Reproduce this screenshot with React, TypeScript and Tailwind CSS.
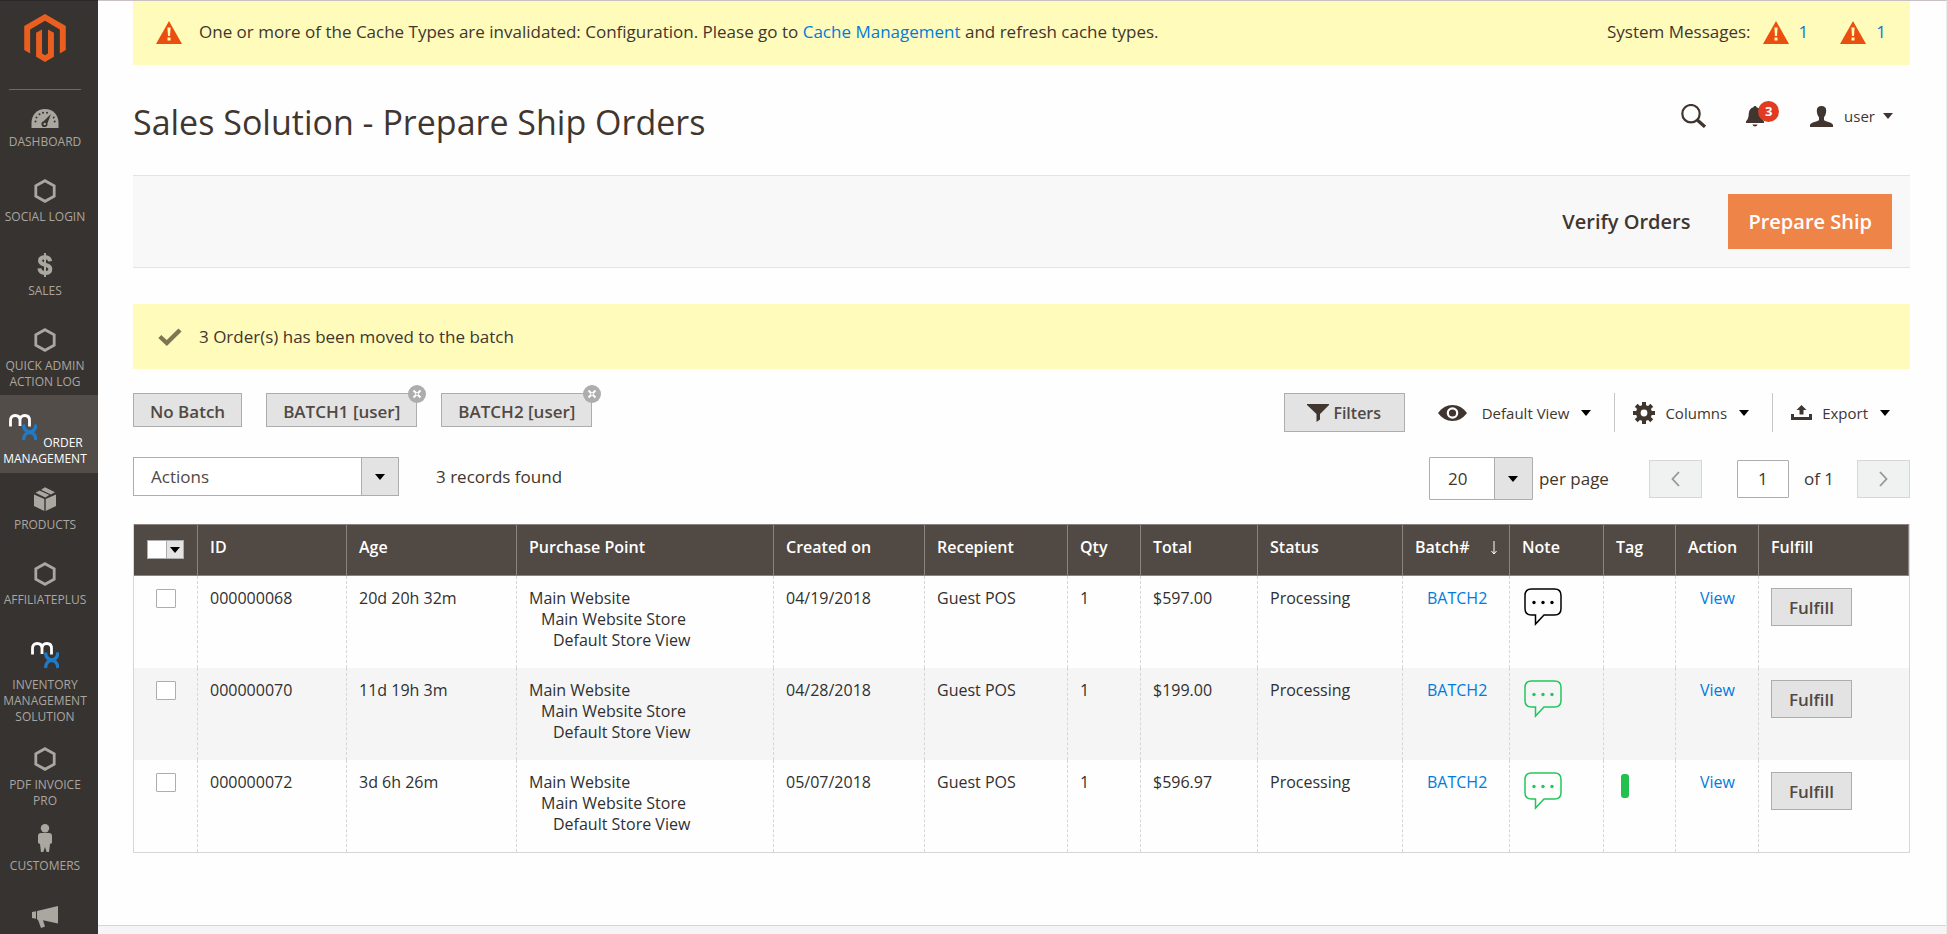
import clsx from 'clsx';
import { ReactNode } from 'react';

type IconProps = {
	className?: string;
};

type MenuItem = {
	label: string;
	icon: ReactNode;
	spacing: string;
};

type Order = {
	id: string;
	age: string;
	created: string;
	qty: number;
	total: string;
	batch: string;
	hasNote: boolean;
	tagged: boolean;
};

const MagentoLogo = () => (
	<svg viewBox="1.6 0 20.8 24" className="h-12 w-[42px] fill-[#ea5f1f]" aria-hidden="true">
		<path d="M12 24l-4.455-2.572v-12l2.97-1.715v12.001l1.485.902 1.485-.902V7.713l2.971 1.715v12L12 24zM22.391 6v12l-2.969 1.714V7.713L12 3.43 4.574 7.713v12.001L1.609 18V6L12 0l10.391 6z" />
	</svg>
);

const GaugeIcon = () => (
	<svg viewBox="0 0 28 24" className="h-6 w-7" aria-hidden="true">
		<path d="M.5 24v-5C.5 11 6 5 14 5s13.500 6 13.500 14v5z" fill="#aaa6a0" />
		<g fill="#373330">
			<circle cx="4.5" cy="17.5" r="1" />
			<circle cx="5.5" cy="13.5" r="1" />
			<circle cx="8.5" cy="10.3" r="1" />
			<circle cx="12" cy="8.7" r="1" />
			<circle cx="16" cy="8.7" r="1" />
			<circle cx="22.7" cy="13.5" r="1" />
			<circle cx="23.7" cy="17.5" r="1" />
			<path d="M20 10l-3.600 9.400a3 3 0 1 1-3.800-2.200z" />
		</g>
		<circle cx="13.7" cy="20" r="1.2" fill="#aaa6a0" />
	</svg>
);

const HexIcon = () => (
	<svg viewBox="0 0 22 24" className="h-6 w-[22px]" aria-hidden="true">
		<path d="M11 1.7l9.2 5.2v10.2L11 22.3l-9.2-5.2V6.9z" fill="none" stroke="#aaa6a0" strokeWidth="2.8" />
	</svg>
);

const DollarIcon = () => (
	<svg viewBox="0 0 16 24" className="h-6 w-4" aria-hidden="true">
		<g fill="none" stroke="#aaa6a0">
			<path d="M13.2 8.2C12.8 5.6 11 4.3 8 4.3S3 5.6 3 7.8s1.600 3.100 5 3.900 5.300 1.700 5.300 4.200-2 4-5.300 4-5.300-1.500-5.600-4.500" strokeWidth="4" />
			<path d="M8 0v24" strokeWidth="2" />
		</g>
	</svg>
);

const MxIcon = () => (
	<svg viewBox="0 0 28 28" className="size-7 shrink-0" aria-hidden="true">
		<g fill="none">
			<path d="M1.500 13.500V7.500c0-3.200 1.700-5 4.700-5s4.800 1.800 4.800 5v5.500M11 7.500c0-3.200 1.800-5 4.800-5s4.700 1.800 4.700 5v6" stroke="#fff" strokeWidth="2.800" />
			<path d="M14.500 11.500c.4 5 2.600 7.300 6.200 7.300s5.800-2.300 6.200-7.300M14.500 27c.4-5 2.600-7.300 6.200-7.300s5.800 2.300 6.200 7.300" stroke="#1f7bc9" strokeWidth="3.200" />
		</g>
	</svg>
);

const BoxIcon = () => (
	<svg viewBox="0 0 22 24" className="h-6 w-[22px] fill-[#aaa6a0]" aria-hidden="true">
		<path d="M0 7.500l10.300 4.500v12L0 19zM22 7.500L11.700 12v12L22 19z" />
		<path d="M1.500 5.800l4-2.300 9.800 4.400-4 2.500zM7 2.700L11 .3l10 5-4.200 2.100z" />
	</svg>
);

const PersonIcon = () => (
	<svg viewBox="0 0 14 28" className="h-7 w-3.5 fill-[#aaa6a0]" aria-hidden="true">
		<circle cx="7" cy="4.200" r="4.200" />
		<path d="M3 9h8c2 0 3 1.300 3 3v7l-2 1-1 8.500H8.800L7 23l-1.800 5.500H3L2 20l-2-1v-7c0-1.700 1-3 3-3z" />
	</svg>
);

const MegaphoneIcon = () => (
	<svg viewBox="0 0 26 22" className="h-[22px] w-[26px] fill-[#aaa6a0]" aria-hidden="true">
		<path d="M0 6l4-.8v7.600L0 12zM5 5l21-5v17.500L11 14.300l2 6.200-4 1.500-3-8.300-1-.2z" />
	</svg>
);

const WarningIcon = () => (
	<svg viewBox="0 0 26 23" className="h-[23px] w-[26px] shrink-0" role="img" aria-label="Warning">
		<path d="M13 0l13 23H0z" fill="#eb4f10" />
		<path d="M11.400 6.500h3.200l-.6 8.500h-2zM11.500 16.500h3v3h-3z" fill="#fffbbb" />
	</svg>
);

const CheckIcon = () => (
	<svg viewBox="0 0 24 18" className="h-[18px] w-6 shrink-0" aria-hidden="true">
		<path d="M1.800 8.500l7 6.500L22 2" fill="none" stroke="#7d7650" strokeWidth="4.400" />
	</svg>
);

const SearchIcon = () => (
	<svg viewBox="0 0 25 24" className="h-6 w-[25px]" aria-hidden="true">
		<g fill="none" stroke="#41362f">
			<circle cx="10" cy="9.700" r="8.700" strokeWidth="2.200" />
			<path d="M16 15.800l8 7" strokeWidth="3.400" />
		</g>
	</svg>
);

const BellIcon = () => (
	<svg viewBox="0 0 18 21" className="h-[21px] w-[18px] fill-[#41362f]" aria-hidden="true">
		<path d="M9 0c.8 0 1.400.500 1.500 1.300 3 .7 4.500 3 4.700 6 .2 4 .8 6 2.800 8.200v1.500H0v-1.500c2-2.200 2.600-4.200 2.800-8.200.2-3 1.700-5.300 4.700-6C7.600.5 8.200 0 9 0zM6.500 18.500h5c-.3 1.300-1.200 2-2.500 2s-2.200-.7-2.500-2z" />
	</svg>
);

const UserIcon = () => (
	<svg viewBox="0 0 23 21" className="h-[21px] w-[23px] fill-[#41362f]" aria-hidden="true">
		<path d="M11.500 0c3 0 4.700 1.700 4.700 4.500 0 2.500-.7 5-2.200 6.700V14c.5 1.500 8.500 2 9 5v2H0v-2c.5-3 8.500-3.500 9-5v-2.800C7.500 9.500 6.800 7 6.800 4.500 6.800 1.700 8.500 0 11.500 0z" />
	</svg>
);

const FunnelIcon = () => (
	<svg viewBox="0 0 22 18" className="h-[18px] w-[22px] fill-[#41362f]" aria-hidden="true">
		<path d="M0 0h22v1l-9 9v5.500L9.500 18v-8L0 1z" />
	</svg>
);

const EyeIcon = () => (
	<svg viewBox="0 0 29 16" className="h-4 w-[29px]" aria-hidden="true">
		<path d="M0 8c4-5.300 8.500-8 14.500-8S25 2.700 29 8c-4 5.300-8.500 8-14.500 8S4 13.300 0 8z" fill="#41362f" />
		<circle cx="14.500" cy="8" r="4.700" fill="none" stroke="#fff" strokeWidth="2.200" />
	</svg>
);

const GearIcon = () => (
	<svg viewBox="-11 -11 22 22" className="size-[22px]" aria-hidden="true">
		<g fill="#41362f">
			<path d="M-2-11h4v22h-4zM-11-2h22v4h-22z" />
			<path d="M-2-11h4v22h-4zM-11-2h22v4h-22z" transform="rotate(45)" />
			<circle r="8" />
		</g>
		<circle r="3.400" fill="#fff" />
	</svg>
);

const ExportIcon = () => (
	<svg viewBox="0 0 21 15" className="h-[15px] w-[21px] fill-[#41362f]" aria-hidden="true">
		<path d="M0 9h3v3h15V9h3v6H0z" />
		<path d="M10.500 0l5 5h-3v4.500h-4V5h-3z" />
	</svg>
);

const Caret = ({ className }: IconProps) => (
	<svg viewBox="0 0 10 6" className={clsx('h-1.5 w-2.5 shrink-0', className)} aria-hidden="true">
		<path d="M0 0h10L5 6z" fill="currentColor" />
	</svg>
);

const Chevron = ({ className }: IconProps) => (
	<svg viewBox="0 0 9 16" className={clsx('h-4 w-[9px]', className)} aria-hidden="true">
		<path d="M8 1L1.500 8 8 15" fill="none" stroke="#9b9591" strokeWidth="1.800" />
	</svg>
);

const CloseIcon = () => (
	<svg viewBox="0 0 18 18" className="size-[18px]" aria-hidden="true">
		<circle cx="9" cy="9" r="9" fill="#adadad" />
		<path d="M5.500 5.500l7 7M12.500 5.500l-7 7" stroke="#fff" strokeWidth="2" />
		<circle cx="9" cy="9" r="1" fill="#adadad" />
	</svg>
);

const NoteIcon = ({ className }: IconProps) => (
	<svg viewBox="0 0 38 38" className={clsx('h-[38px] w-[38px]', className)} aria-hidden="true">
		<path
			d="M7.500 1h23c4 0 6.500 2.500 6.500 6.500v13c0 4-2.500 6.500-6.500 6.500H20l-8.500 9v-9h-4C3.500 27 1 24.500 1 20.500v-13C1 3.500 3.500 1 7.500 1z"
			fill="none"
			stroke="currentColor"
			strokeWidth="1.500"
		/>
		<g fill="currentColor">
			<circle cx="10" cy="14.500" r="1.700" />
			<circle cx="19" cy="14.500" r="1.700" />
			<circle cx="28" cy="14.500" r="1.700" />
		</g>
	</svg>
);

const menuTop: MenuItem[] = [
	{ label: 'Dashboard', icon: <GaugeIcon />, spacing: 'gap-1.5 pt-3.5' },
	{ label: 'Social Login', icon: <HexIcon />, spacing: 'gap-1.5 pt-6' },
	{ label: 'Sales', icon: <DollarIcon />, spacing: 'gap-1.5 pt-[23px]' },
	{ label: 'Quick Admin Action Log', icon: <HexIcon />, spacing: 'gap-1.5 pt-6' },
];

const menuBottom: MenuItem[] = [
	{ label: 'Products', icon: <BoxIcon />, spacing: 'gap-1.5 pt-3.5' },
	{ label: 'Affiliateplus', icon: <HexIcon />, spacing: 'gap-1.5 pt-6' },
	{ label: 'Inventory Management Solution', icon: <MxIcon />, spacing: 'gap-2 pt-7' },
	{ label: 'PDF Invoice Pro', icon: <HexIcon />, spacing: 'gap-1.5 pt-[17px]' },
	{ label: 'Customers', icon: <PersonIcon />, spacing: 'gap-1.5 pt-2.5' },
];

const batches = ['BATCH1 [user]', 'BATCH2 [user]'];

const orders: Order[] = [
	{ id: '000000068', age: '20d 20h 32m', created: '04/19/2018', qty: 1, total: '$597.00', batch: 'BATCH2', hasNote: false, tagged: false },
	{ id: '000000070', age: '11d 19h 3m', created: '04/28/2018', qty: 1, total: '$199.00', batch: 'BATCH2', hasNote: true, tagged: false },
	{ id: '000000072', age: '3d 6h 26m', created: '05/07/2018', qty: 1, total: '$596.97', batch: 'BATCH2', hasNote: true, tagged: true },
];

const MenuLink = ({ label, icon, spacing }: MenuItem) => (
	<li>
		<a href="#" className={clsx('flex flex-col items-center pr-2 pb-[5px]', spacing)}>
			{icon}
			<span className="text-center">{label}</span>
		</a>
	</li>
);

const Sidebar = () => (
	<aside className="w-[98px] shrink-0 border-t border-[#2a2728] bg-[#373330] text-xs leading-4 text-[#aaa6a0] uppercase">
		<a href="#" aria-label="Home" className="mr-[17px] ml-[9px] flex h-[89px] justify-center border-b border-[#736963] pt-[13px]">
			<MagentoLogo />
		</a>
		<ul>
			{menuTop.map((item) => (
				<MenuLink key={item.label} {...item} />
			))}
			<li className="bg-[#524d49] text-white">
				<a href="#" className="block pt-[18px] pr-2 pb-1.5 text-center font-medium">
					<span className="flex items-start justify-center gap-1.5 pl-0.5">
						<MxIcon />
						<span className="pt-[22px]">Order</span>
					</span>
					<span className="block">Management</span>
				</a>
			</li>
			{menuBottom.map((item) => (
				<MenuLink key={item.label} {...item} />
			))}
			<li>
				<a href="#" aria-label="Marketing" className="flex justify-center pt-[27px] pr-2">
					<MegaphoneIcon />
				</a>
			</li>
		</ul>
	</aside>
);

const SystemMessages = () => (
	<div className="flex h-16 items-center bg-[#fffbbb] pr-6 pb-0.5 pl-[23px]">
		<WarningIcon />
		<p className="ml-[17px]">
			One or more of the Cache Types are invalidated: Configuration. Please go to{' '}
			<a href="#" className="text-[#007bdb]">
				Cache Management
			</a>{' '}
			and refresh cache types.
		</p>
		<div className="ml-auto flex items-center">
			<span className="mr-3">System Messages:</span>
			<WarningIcon />
			<a href="#" className="mr-8 ml-2.5 text-[#007bdb]">
				1
			</a>
			<WarningIcon />
			<a href="#" className="ml-2.5 text-[#007bdb]">
				1
			</a>
		</div>
	</div>
);

const PageHeader = () => (
	<header className="flex h-[110px] items-start">
		<h1 className="pt-[35px] text-[34px] leading-[44px]">
			Sales Solution - Prepare Ship Orders
		</h1>
		<div className="ml-auto flex items-center pt-[39px] pr-[17px]">
			<button aria-label="Search">
				<SearchIcon />
			</button>
			<button aria-label="Notifications" className="relative ml-10">
				<BellIcon />
				<span className="absolute -top-[5px] left-3 flex size-[21px] items-center justify-center rounded-full bg-[#e13b22] text-[13px] font-bold text-white">
					3
				</span>
			</button>
			<button className="ml-[46px] flex items-center text-[15px]">
				<UserIcon />
				<span className="mr-2 ml-[11px]">user</span>
				<Caret />
			</button>
		</div>
	</header>
);

const BatchTabs = () => (
	<div className="flex gap-6">
		<button className="h-[34px] border border-[#adadad] bg-[#e3e3e3] px-4 pt-1 font-semibold text-[#514943]">
			No Batch
		</button>
		{batches.map((batch) => (
			<div key={batch} className="relative">
				<button className="h-[34px] border border-[#adadad] bg-[#e3e3e3] px-4 pt-1 font-semibold text-[#514943]">
					{batch}
				</button>
				<button aria-label={`Remove ${batch}`} className="absolute -top-2 -right-[9px]">
					<CloseIcon />
				</button>
			</div>
		))}
	</div>
);

const GridControls = () => (
	<div className="flex h-[39px] text-[15px]">
		<button className="flex w-[121px] items-center justify-center gap-1 border border-[#adadad] bg-[#e3e3e3] text-base font-semibold text-[#514943]">
			<FunnelIcon />
			Filters
		</button>
		<button className="flex items-center pr-[23px] pl-[33px]">
			<EyeIcon />
			<span className="mr-3 ml-[15px]">Default View</span>
			<Caret className="text-black" />
		</button>
		<button className="flex items-center border-l border-[#c9c5c3] pr-[23px] pl-[18px]">
			<GearIcon />
			<span className="mr-3 ml-2.5">Columns</span>
			<Caret className="text-black" />
		</button>
		<button className="flex items-center border-l border-[#c9c5c3] pr-5 pl-[18px]">
			<ExportIcon />
			<span className="mr-3 ml-2.5">Export</span>
			<Caret className="text-black" />
		</button>
	</div>
);

const Pager = () => (
	<div className="flex items-center">
		<div className="relative">
			<select
				id="page-size"
				defaultValue="20"
				className="block h-[43px] w-[104px] appearance-none rounded-[1px] border border-[#adadad] bg-white pl-[18px]"
			>
				<option>20</option>
				<option>30</option>
				<option>50</option>
			</select>
			<span className="pointer-events-none absolute top-px right-px bottom-px flex w-[38px] items-center justify-center border-l border-[#adadad] bg-[#e3e3e3] text-black">
				<Caret />
			</span>
		</div>
		<label htmlFor="page-size" className="mr-10 ml-1.5">
			per page
		</label>
		<button aria-label="Previous page" className="flex h-[38px] w-[53px] items-center justify-center border border-[#d6d6d6] bg-[#f0f1f1]">
			<Chevron />
		</button>
		<input
			aria-label="Page"
			defaultValue="1"
			className="mr-[15px] ml-[35px] h-[38px] w-[52px] rounded-[1px] border border-[#adadad] bg-white text-center"
		/>
		<span className="mr-[23px]">of 1</span>
		<button aria-label="Next page" className="flex h-[38px] w-[53px] items-center justify-center border border-[#d6d6d6] bg-[#f0f1f1]">
			<Chevron className="rotate-180" />
		</button>
	</div>
);

const headCell = 'h-[52px] border-y border-r border-[#8a837f] px-3 pt-3 align-top text-left font-semibold';
const bodyCell = 'border-r border-dashed border-[#d6d6d6] px-3 pt-3 align-top';

const OrdersTable = () => (
	<table className="w-full table-fixed border-separate border-spacing-0 border-x border-b border-[#d6d6d6] text-base leading-[21px] text-[#303030]">
		<colgroup>
			<col className="w-16" />
			<col className="w-[149px]" />
			<col className="w-[170px]" />
			<col className="w-[257px]" />
			<col className="w-[151px]" />
			<col className="w-[143px]" />
			<col className="w-[73px]" />
			<col className="w-[117px]" />
			<col className="w-[145px]" />
			<col className="w-[107px]" />
			<col className="w-[94px]" />
			<col className="w-[72px]" />
			<col className="w-[83px]" />
			<col className="w-[150px]" />
		</colgroup>
		<thead>
			<tr className="bg-[#514943] text-white">
				<th className="h-[52px] border-y border-r border-[#8a837f] pt-[15px] align-top">
					<div className="mx-auto flex h-[19px] w-[37px] border border-[#adadad]">
						<input type="checkbox" aria-label="Select all" className="h-full w-[18px] appearance-none bg-white" />
						<button aria-label="Selection options" className="flex flex-1 items-center justify-center border-l border-[#adadad] bg-[#e3e3e3] text-black">
							<Caret />
						</button>
					</div>
				</th>
				<th className={headCell}>ID</th>
				<th className={headCell}>Age</th>
				<th className={headCell}>Purchase Point</th>
				<th className={headCell}>Created on</th>
				<th className={headCell}>Recepient</th>
				<th className={headCell}>Qty</th>
				<th className={headCell}>Total</th>
				<th className={headCell}>Status</th>
				<th className={headCell}>
					<div className="flex justify-between">
						Batch#
						<svg viewBox="0 0 6 14" className="mt-1 h-3.5 w-1.5" aria-hidden="true">
							<path d="M3 0v13M.500 10L3 13l2.500-3" fill="none" stroke="#fff" />
						</svg>
					</div>
				</th>
				<th className={headCell}>Note</th>
				<th className={headCell}>Tag</th>
				<th className={headCell}>Action</th>
				<th className={headCell}>Fulfill</th>
			</tr>
		</thead>
		<tbody>
			{orders.map((order) => (
				<tr key={order.id} className="h-[92px] even:bg-[#f5f5f5]">
					<td className="border-r border-dashed border-[#d6d6d6] pt-[13px] align-top">
						<input
							type="checkbox"
							aria-label={`Select order ${order.id}`}
							className="mx-auto block h-[19px] w-5 appearance-none rounded-[1px] border border-[#adadad] bg-white"
						/>
					</td>
					<td className={bodyCell}>{order.id}</td>
					<td className={bodyCell}>{order.age}</td>
					<td className={bodyCell}>
						<p>Main Website</p>
						<p className="pl-3">Main Website Store</p>
						<p className="pl-6">Default Store View</p>
					</td>
					<td className={bodyCell}>{order.created}</td>
					<td className={bodyCell}>Guest POS</td>
					<td className={bodyCell}>{order.qty}</td>
					<td className={bodyCell}>{order.total}</td>
					<td className={bodyCell}>Processing</td>
					<td className={bodyCell}>
						<a href="#" className="pl-3 text-[#007bdb]">
							{order.batch}
						</a>
					</td>
					<td className={bodyCell}>
						<button aria-label={`Note for order ${order.id}`} className="block pl-0.5">
							<NoteIcon className={order.hasNote ? 'text-[#22c65b]' : 'text-black'} />
						</button>
					</td>
					<td className={bodyCell}>
						{order.tagged && <span className="mt-0.5 ml-[5px] block h-6 w-2 rounded-[3px] bg-[#22c04e]" />}
					</td>
					<td className={bodyCell}>
						<a href="#" className="pl-3 text-[#007bdb]">
							View
						</a>
					</td>
					<td className="px-3 pt-3 align-top">
						<button className="h-[38px] border border-[#adadad] bg-[#e3e3e3] px-[17px] text-[17px] font-semibold text-[#514943]">
							Fulfill
						</button>
					</td>
				</tr>
			))}
		</tbody>
	</table>
);

export default function App() {
	return (
		<div className="flex min-h-screen bg-[#fefefe] font-['Open_Sans','Noto_Sans',sans-serif] text-[17px] leading-6 text-[#41362f]">
			<Sidebar />
			<div className="flex min-w-0 flex-1 flex-col border-t border-r border-t-[#c9c0c4] border-r-[#ebebeb]">
				<main className="flex-1 pr-9 pl-[35px]">
					<SystemMessages />
					<PageHeader />
					<div className="flex h-[93px] items-center justify-end border-y border-[#e3e3e3] bg-[#f8f8f8] pr-[18px] text-xl font-semibold">
						<button className="pr-[38px] pl-9">Verify Orders</button>
						<button className="h-[55px] bg-[#ef8449] px-5 text-white">Prepare Ship</button>
					</div>
					<div className="mt-9 flex h-[65px] items-center bg-[#fffbbb] pl-[25px]">
						<CheckIcon />
						<p className="ml-[17px]">3 Order(s) has been moved to the batch</p>
					</div>
					<div className="mt-6 flex items-start justify-between">
						<BatchTabs />
						<GridControls />
					</div>
					<div className="mt-[25px] flex items-start">
						<div className="relative">
							<select
								aria-label="Actions"
								className="block h-[39px] w-[266px] appearance-none border border-[#adadad] bg-white pl-[17px] text-[#514943]"
							>
								<option>Actions</option>
							</select>
							<span className="pointer-events-none absolute top-px right-px bottom-px flex w-[37px] items-center justify-center border-l border-[#adadad] bg-[#e3e3e3] text-black">
								<Caret />
							</span>
						</div>
						<p className="ml-[37px] leading-[39px]">3 records found</p>
						<div className="ml-auto">
							<Pager />
						</div>
					</div>
					<div className="mt-6 pr-px">
						<OrdersTable />
					</div>
				</main>
				<footer className="h-[9px] border-t border-[#d6d6d6] bg-[#f5f5f5]" />
			</div>
		</div>
	);
}
